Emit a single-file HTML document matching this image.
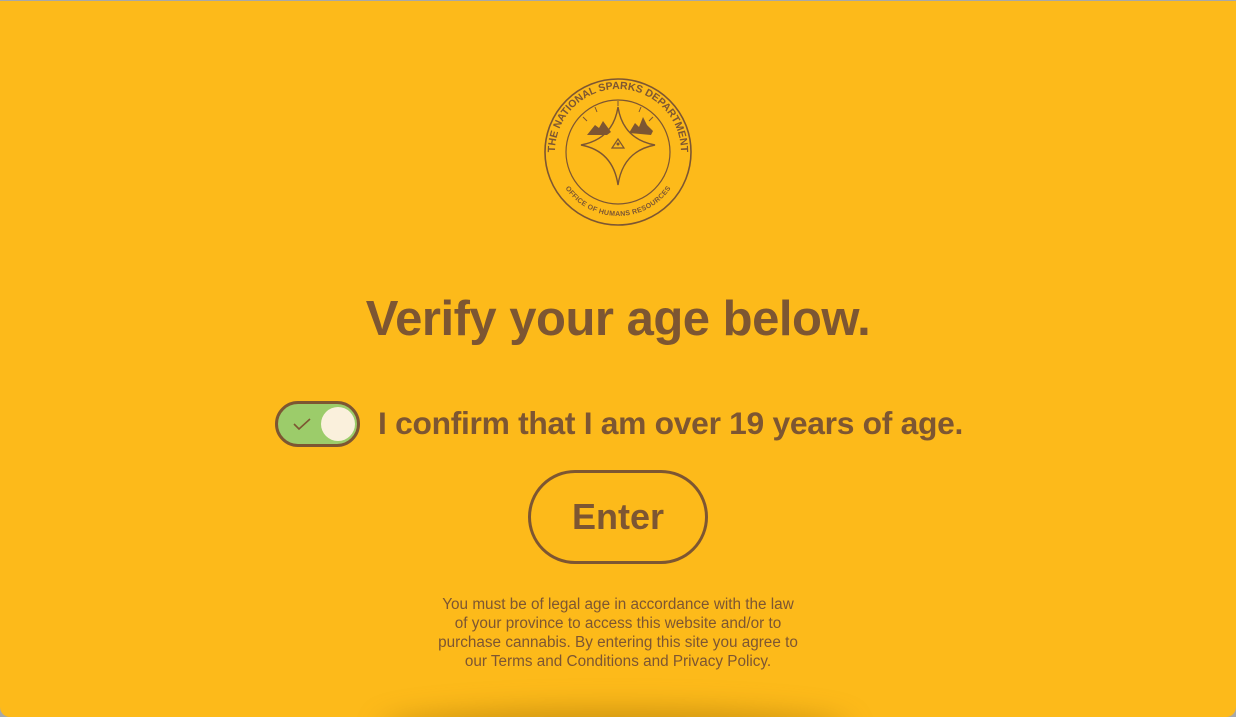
<!DOCTYPE html>
<html><head><style>
html,body{margin:0;padding:0;}
body{width:1236px;height:717px;background:#a8a8a8;overflow:hidden;font-family:"Liberation Sans",sans-serif;color:#7d5632;}
.page{position:absolute;left:0;top:1px;width:1236px;height:716px;background:#fdba1a;border-radius:0 0 10px 10px;overflow:hidden;}
.shadow{position:absolute;left:380px;top:708px;width:470px;height:40px;border-radius:50%;background:rgba(120,80,0,0.35);filter:blur(14px);}
h1{position:absolute;left:0;width:1236px;top:290px;margin:0;text-align:center;font-size:49px;font-weight:bold;letter-spacing:-0.5px;}
.toggle{position:absolute;left:275px;top:400px;width:79px;height:40px;border:3px solid #7d5632;border-radius:24px;background:#9ccc6a;}
.knob{position:absolute;left:43px;top:3px;width:34px;height:34px;border-radius:50%;background:#faf0dc;}
.conf{position:absolute;left:378px;top:404px;font-size:31.8px;font-weight:bold;white-space:nowrap;letter-spacing:-0.3px;}
.enter{position:absolute;left:528px;top:469px;width:174px;height:88px;border:3px solid #7d5632;border-radius:47px;text-align:center;line-height:88px;font-size:36px;font-weight:bold;}
.small{position:absolute;left:0;width:1236px;top:594px;text-align:center;font-size:15.3px;line-height:19px;}
</style></head><body>
<div class="page">
<svg style="position:absolute;left:543px;top:76px" width="150" height="150" viewBox="0 0 150 150">
<g fill="none" stroke="#7d5632">
<circle cx="75" cy="75" r="73" stroke-width="1.6"/>
<circle cx="75" cy="75" r="52" stroke-width="1.2"/>
<path d="M75 30 Q80 62 112 68 Q80 74 75 108 Q70 74 38 68 Q70 62 75 30Z" stroke-width="1.4"/>
<path d="M69 71 L75 62 L81 71 Z" stroke-width="1.2"/>
<path d="M40 40 l4 4 M52 30 l2 5 M75 24 v5 M98 30 l-2 5 M110 40 l-4 4" stroke-width="1"/>
</g>
<g fill="#7d5632">
<path d="M44 58 L52 48 L56 51 L60 44 L68 55 L64 58Z"/>
<path d="M86 56 L92 46 L96 50 L100 40 L104 48 L110 54 L108 58Z"/>
<circle cx="75" cy="67" r="1.5"/>
</g>
<defs>
<path id="tp" d="M75 138 A63 63 0 1 1 75 12 A63 63 0 1 1 75 138"/>
<path id="bp" d="M75 15 A60 60 0 1 0 75 135 A60 60 0 1 0 75 15"/>
</defs>
<text font-size="10.5" font-weight="bold" fill="#7d5632" font-family="Liberation Sans,sans-serif"><textPath href="#tp" startOffset="50%" text-anchor="middle">THE NATIONAL SPARKS DEPARTMENT</textPath></text>
<text font-size="7" font-weight="bold" fill="#7d5632" font-family="Liberation Sans,sans-serif"><textPath href="#bp" startOffset="50%" text-anchor="middle" dominant-baseline="hanging">OFFICE OF HUMANS RESOURCES</textPath></text>
</svg>
<h1>Verify your age below.</h1>
<div class="toggle">
<svg style="position:absolute;left:14px;top:12px" width="20" height="16" viewBox="0 0 20 16"><path d="M2 8 L7 13 L18 3" fill="none" stroke="#7d5632" stroke-width="1.6"/></svg>
<div class="knob"></div></div>
<div class="conf">I confirm that I am over 19 years of age.</div>
<div class="enter">Enter</div>
<div class="small">You must be of legal age in accordance with the law<br>of your province to access this website and/or to<br>purchase cannabis. By entering this site you agree to<br>our Terms and Conditions and Privacy Policy.</div>
<div class="shadow"></div>
</div>
</body></html>
